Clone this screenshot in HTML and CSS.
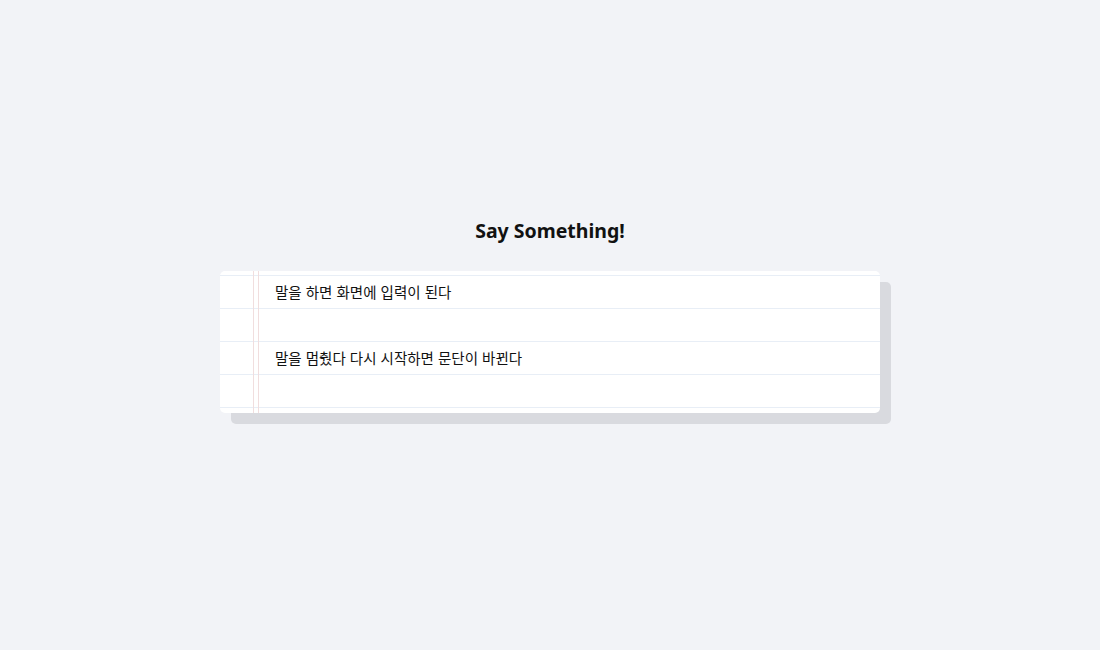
FILE: index.html
```html
<!DOCTYPE html>
<html lang="ko">
<head>
<meta charset="utf-8">
<link rel="stylesheet" href="styles.css">
</head>
<body>
<main class="page">
  <h1 class="title">Say Something!</h1>
  <div class="sheet">
    <div class="card">
      <div class="row">말을 하면 화면에 입력이 된다</div>
      <div class="row"></div>
      <div class="row">말을 멈췄다 다시 시작하면 문단이 바뀐다</div>
      <div class="row"></div>
    </div>
  </div>
</main>
</body>
</html>
```
FILE: styles.css
```css
html, body {
  margin: 0;
  padding: 0;
  background: #f2f3f7;
  font-family: "Noto Sans CJK KR", "Noto Sans", sans-serif;
  color: #111;
}
.page {
  display: flex;
  flex-direction: column;
  align-items: center;
  box-sizing: border-box;
  min-height: 650px;
  padding-top: 215px;
  padding-bottom: 40px;
}
.title {
  margin: 0 0 25px;
  font-family: "Noto Sans", "Noto Sans CJK KR", sans-serif;
  font-size: 19.5px;
  font-weight: 700;
  line-height: 31px;
  color: #111;
}
.sheet {
  position: relative;
  width: 660px;
  margin-bottom: 11px;
}
.sheet::before {
  content: "";
  position: absolute;
  top: 11px;
  left: 11px;
  right: -11px;
  bottom: -11px;
  background: #d9dadf;
  border-radius: 5px;
}
.card {
  position: relative;
  box-sizing: border-box;
  background: #fff;
  border-radius: 5px;
  padding: 4px 0 5px;
}
.card::before {
  content: "";
  position: absolute;
  top: 0;
  bottom: 0;
  left: 33px;
  width: 4px;
  border-left: 1px solid #f1dede;
  border-right: 1px solid #f1dede;
}
.row {
  height: 33px;
  box-sizing: border-box;
  border-top: 1px solid #e8eef6;
  padding-left: 55px;
  font-size: 14.5px;
  line-height: 31px;
  color: #111;
}
.row:last-child {
  border-bottom: 1px solid #e8eef6;
  height: 34px;
}
```
